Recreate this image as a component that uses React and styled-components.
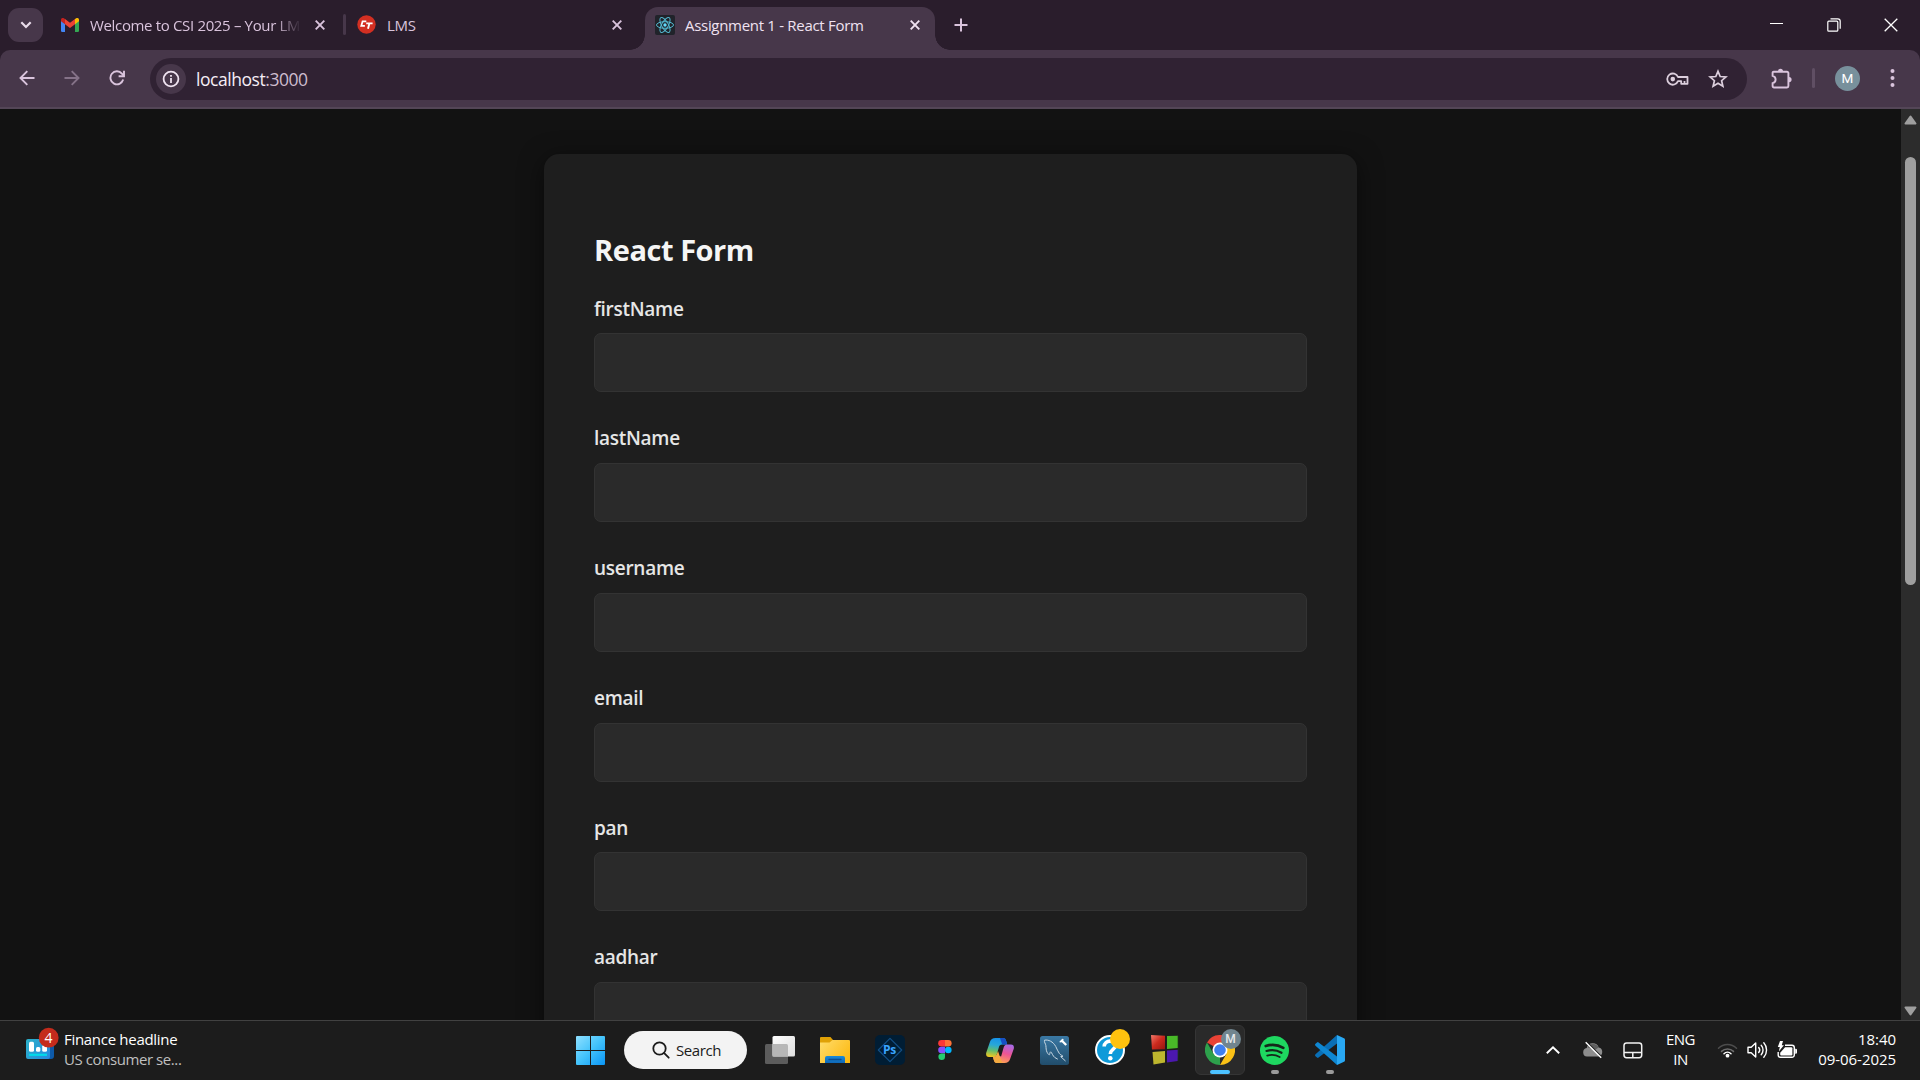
import React from 'react';
import styled, { createGlobalStyle } from 'styled-components';

const GlobalStyle = createGlobalStyle`
  *, *::before, *::after { box-sizing: border-box; }
  html, body { margin: 0; padding: 0; background: #121212; overflow: hidden; }
  body { font-family: 'Open Sans', 'Noto Sans', sans-serif; }
  svg { display: block; flex: none; }
`;

const Screen = styled.div`
  width: 1920px;
  height: 1080px;
  display: flex;
  flex-direction: column;
  overflow: hidden;
  background: #121212;
`;

/* ---------- tab strip ---------- */
const TabStrip = styled.header`
  height: 50px;
  flex: none;
  display: flex;
  align-items: flex-start;
  background: #2a1d2c;
  padding-left: 8px;
  color: #d9c3dc;
`;
const TabSearch = styled.button`
  width: 35px;
  height: 34px;
  margin: 8px 7px 0 0;
  padding: 0;
  border: 0;
  border-radius: 11px;
  background: #47374a;
  color: #e9dcea;
  display: grid;
  place-items: center;
`;
const Tab = styled.div`
  position: relative;
  width: ${(p) => p.$width}px;
  height: ${(p) => (p.$active ? 43 : 34)}px;
  margin-top: ${(p) => (p.$active ? 7 : 8)}px;
  margin-left: ${(p) => p.$offset || 0}px;
  padding: ${(p) => (p.$active ? '0 15px 8px 10px' : '0 9px 0 11px')};
  display: flex;
  align-items: center;
  gap: ${(p) => p.$gap}px;
  border-radius: 13px 13px 0 0;
  background: ${(p) => (p.$active ? '#47374a' : 'transparent')};
  color: ${(p) => (p.$active ? '#f0e2f1' : '#d9c3dc')};
  ${(p) =>
    p.$active &&
    `
    &::before, &::after {
      content: '';
      position: absolute;
      bottom: 0;
      width: 15px;
      height: 15px;
    }
    &::before { left: -15px; background: radial-gradient(circle at 0 0, transparent 14.5px, #47374a 15px); }
    &::after { right: -15px; background: radial-gradient(circle at 100% 0, transparent 14.5px, #47374a 15px); }
  `}
`;
const TabTitle = styled.span`
  flex: 1;
  min-width: 0;
  overflow: hidden;
  white-space: nowrap;
  font-size: 15px;
  line-height: 22px;
  letter-spacing: ${(p) => p.$spacing || 0}px;
  ${(p) => p.$fade && 'mask-image: linear-gradient(90deg, #000 185px, transparent 211px);'}
`;
const TabDivider = styled.i`
  width: 3px;
  height: 21px;
  margin: 14px 0 0 9px;
  border-radius: 2px;
  background: #47374a;
`;
const NewTab = styled.div`
  margin: 17px 0 0 18px;
`;
const WindowControls = styled.div`
  margin-left: auto;
  padding-right: 1px;
  height: 50px;
  display: flex;
  align-items: center;
  color: #fff;
`;
const WindowButton = styled.div`
  width: 57px;
  display: grid;
  place-items: center;
`;

/* ---------- toolbar ---------- */
const ToolbarBack = styled.div`
  flex: none;
  background: #2a1d2c;
`;
const Toolbar = styled.nav`
  height: 59px;
  display: flex;
  align-items: center;
  padding: 0 0 1px 5px;
  border-bottom: 2px solid #544657;
  border-radius: 10px 10px 0 0;
  background: #47374a;
  color: #dac4dd;
`;
const ToolButton = styled.div`
  width: 45px;
  height: 40px;
  padding-right: 1px;
  display: grid;
  place-items: center;
  opacity: ${(p) => (p.$dim ? 0.42 : 1)};
`;
const Omnibox = styled.div`
  width: 1597px;
  height: 42px;
  margin: 1px 24px 0 10px;
  padding: 0 19px 0 6px;
  border-radius: 21px;
  background: #302233;
  display: flex;
  align-items: center;
`;
const SiteInfo = styled.div`
  width: 30px;
  height: 30px;
  border-radius: 50%;
  background: #47374a;
  color: #efe3f0;
  display: grid;
  place-items: center;
`;
const Address = styled.span`
  flex: 1;
  margin-left: 10px;
  font-size: 17.5px;
  line-height: 24px;
  letter-spacing: -0.45px;
  color: #f6eef6;
  span { color: #cdbdcf; }
`;
const OmniIcons = styled.div`
  display: flex;
  align-items: center;
  gap: 19px;
  color: #dccfdd;
`;
const ToolDivider = styled.i`
  width: 3px;
  height: 20px;
  margin: 0 20px 0 20px;
  border-radius: 2px;
  background: #604f64;
`;
const Avatar = styled.div`
  width: 25px;
  height: 25px;
  margin-right: 30px;
  border-radius: 50%;
  background: #78909c;
  color: #fff;
  font: 400 13.5px/25px Roboto, sans-serif;
  text-align: center;
`;

/* ---------- page ---------- */
const Viewport = styled.main`
  flex: 1;
  min-height: 0;
  display: flex;
  overflow: hidden;
`;
const Page = styled.div`
  flex: 1;
  display: flex;
  justify-content: center;
  align-items: flex-start;
  padding-top: 45px;
  background: #121212;
`;
const Card = styled.form`
  width: 813px;
  height: 1400px;
  padding: 50px;
  border-radius: 15px;
  background: #1e1e1e;
  box-shadow: 0 5px 25px rgba(0, 0, 0, 0.5);
`;
const Heading = styled.h2`
  margin: 25px 0 0;
  font-size: 29px;
  line-height: 42px;
  font-weight: 700;
  letter-spacing: -0.45px;
  color: #f5f5f5;
`;
const Field = styled.label`
  display: block;
  height: 129.75px;
  padding-top: 23.7px;
`;
const FieldName = styled.span`
  display: block;
  height: 38.6px;
  font-size: 19px;
  line-height: 28px;
  font-weight: 600;
  letter-spacing: -0.28px;
  color: #e6e6e6;
`;
const Input = styled.input`
  display: block;
  width: 100%;
  height: 59px;
  border: 1px solid #333;
  border-radius: 7px;
  background: #2a2a2a;
  outline: none;
`;
const Scrollbar = styled.div`
  width: 19px;
  background: #2c2c2c;
  display: flex;
  flex-direction: column;
  align-items: center;
  padding: 6px 0 4px;
`;
const Thumb = styled.div`
  width: 11px;
  height: 428px;
  margin: 32px 0 auto;
  border-radius: 6px;
  background: #9f9f9f;
`;

/* ---------- taskbar ---------- */
const Taskbar = styled.footer`
  height: 60px;
  flex: none;
  display: flex;
  align-items: stretch;
  border-top: 1px solid #414141;
  background: #1c1c1c;
  color: #fff;
  font-size: 15px;
  line-height: 20px;
`;
const Widget = styled.div`
  width: 563px;
  padding-left: 26px;
  display: flex;
  gap: 5px;
`;
const WidgetIcon = styled.div`
  width: 33px;
  padding-top: 6px;
`;
const WidgetText = styled.div`
  padding-top: 8px;
  white-space: nowrap;
  div { letter-spacing: -0.3px; }
  div + div { color: #c0c0c0; letter-spacing: -0.42px; }
`;
const Slot = styled.div`
  position: relative;
  width: 55px;
  display: grid;
  place-items: center;
  padding-bottom: 1px;
`;
const ActiveTile = styled.div`
  position: relative;
  width: 50px;
  height: 50px;
  border: 1px solid #353535;
  border-radius: 6px;
  background: #2a2a2a;
  display: grid;
  place-items: center;
`;
const Running = styled.i`
  position: absolute;
  left: 50%;
  bottom: ${(p) => (p.$active ? 0 : 6)}px;
  width: ${(p) => (p.$active ? 20 : 8)}px;
  height: 4px;
  transform: translateX(-50%);
  border-radius: 2px;
  background: ${(p) => (p.$active ? '#4cc2ff' : '#9a9a9a')};
`;
const AppBadge = styled.span`
  position: absolute;
  top: ${(p) => p.$top}px;
  left: ${(p) => p.$left}px;
  width: 20px;
  height: 20px;
  border-radius: 50%;
  background: ${(p) => p.$color};
  color: #e6e9eb;
  font: 500 12px/20px Roboto, sans-serif;
  text-align: center;
`;
const SearchPill = styled.div`
  width: 123px;
  height: 38px;
  margin: 10px 5px 0 6px;
  padding-left: 28px;
  border-radius: 19px;
  background: #f3f3f3;
  color: #1b1b1b;
  display: flex;
  align-items: center;
  gap: 6px;
  span { letter-spacing: -0.42px; }
`;
const Tray = styled.div`
  margin-left: auto;
  padding-right: 24px;
  display: flex;
`;
const TrayCell = styled.div`
  width: ${(p) => p.$width}px;
  display: grid;
  place-items: center;
  padding-bottom: 1px;
`;
const TrayText = styled.div`
  width: ${(p) => p.$width}px;
  padding-top: 8px;
  text-align: ${(p) => p.$align};
  letter-spacing: ${(p) => p.$spacing}px;
  white-space: nowrap;
`;

/* ---------- icons ---------- */
const Svg = ({ w, h, vb, children, ...rest }) => (
  <svg width={w} height={h || w} viewBox={vb || `0 0 ${w} ${h || w}`} fill="none" {...rest}>
    {children}
  </svg>
);
const CloseIcon = () => (
  <Svg w={10} stroke="currentColor" strokeWidth="1.9">
    <path d="M.7.7l8.6 8.6M9.3.7L.7 9.3" />
  </Svg>
);
const GmailIcon = () => (
  <Svg w={18} h={14}>
    <path d="M0 2.2L4 5v9H1.2A1.2 1.2 0 0 1 0 12.8z" fill="#4285f4" />
    <path d="M18 2.2L14 5v9h2.8a1.2 1.2 0 0 0 1.2-1.2z" fill="#34a853" />
    <path d="M4 1v5.2L0 3.2V1.8C0 .1 1.9-.6 3.2.4z" fill="#c5221f" />
    <path d="M14 1v5.2l4-3V1.8c0-1.7-1.9-2.4-3.2-1.400z" fill="#fbbc04" />
    <path d="M4 6.2V1l5 3.750L14 1v5.2l-5 3.750z" fill="#ea4335" />
  </Svg>
);
const CtIcon = () => (
  <Svg w={19} h={20}>
    <circle cx="9.500" cy="9.500" r="9.200" fill="#d32f22" />
    <path d="M9.300 6.300H5.600L4.300 10.800H7.900" stroke="#fff" strokeWidth="1.800" />
    <path d="M9.200 8.400H15.600M12.400 8.400L11 13.800" stroke="#fff" strokeWidth="1.900" />
  </Svg>
);
const ReactIcon = () => (
  <Svg w={20}>
    <rect width="20" height="20" rx="2" fill="#20232a" />
    <g stroke="#53b9d1" strokeWidth="1">
      <ellipse cx="10" cy="10" rx="8.500" ry="3.300" />
      <ellipse cx="10" cy="10" rx="8.500" ry="3.300" transform="rotate(60 10 10)" />
      <ellipse cx="10" cy="10" rx="8.500" ry="3.300" transform="rotate(120 10 10)" />
    </g>
    <circle cx="10" cy="10" r="1.700" fill="#61dafb" />
  </Svg>
);
const BackIcon = () => (
  <Svg w={16} stroke="currentColor" strokeWidth="1.900">
    <path d="M15.500 8H1.800M8.300 1.200L1.500 8l6.800 6.800" />
  </Svg>
);
const ForwardIcon = () => (
  <Svg w={16} stroke="currentColor" strokeWidth="1.900">
    <path d="M.5 8h13.700M7.700 1.200L14.500 8l-6.800 6.800" />
  </Svg>
);
const ReloadIcon = () => (
  <Svg w={16} stroke="currentColor" strokeWidth="1.900">
    <path d="M14.200 9.600A6.500 6.500 0 1 1 12.900 3.600L14.600 5.600" />
    <path d="M15 .8v5.400H9.600" />
  </Svg>
);
const KeyIcon = () => (
  <Svg w={23} h={14} stroke="currentColor" strokeWidth="1.800">
    <path d="M12 5A5.600 5.600 0 1 0 12 9.200H15.200V11.800H21.500V5z" strokeLinejoin="round" />
    <circle cx="6.800" cy="7.100" r="2.300" fill="currentColor" stroke="none" />
    <path d="M18.500 12V9" />
  </Svg>
);
const StarIcon = () => (
  <Svg w={20} stroke="currentColor" strokeWidth="1.700">
    <path d="M10 2.300l2.200 5.200 5.700.5-4.300 3.700 1.300 5.500L10 14.300l-4.900 2.900 1.300-5.500L2.100 8l5.700-.5z" />
  </Svg>
);
const PuzzleIcon = () => (
  <Svg w={21} h={21}>
    <path
      d="M2.600 3.700H16a1.400 1.400 0 0 1 1.400 1.400v13a1.400 1.400 0 0 1-1.400 1.400H3a1.400 1.400 0 0 1-1.400-1.400V15.200c4-1 4-6.400 0-7.400V4.700a1 1 0 0 1 1-1z"
      stroke="currentColor"
      strokeWidth="1.900"
    />
    <path d="M7 3.200a2.500 2.500 0 0 1 5 0zM18 9a2.600 2.600 0 0 1 0 5.200z" fill="currentColor" />
  </Svg>
);
const WindowsIcon = () => (
  <Svg w={29}>
    <defs>
      <linearGradient id="win" x1="0" y1="0" x2="29" y2="29" gradientUnits="userSpaceOnUse">
        <stop stopColor="#8fe0ff" />
        <stop offset=".5" stopColor="#43c3fb" />
        <stop offset="1" stopColor="#0a94f4" />
      </linearGradient>
    </defs>
    <path
      d="M1 0H14V14H0V1A1 1 0 0 1 1 0zM15 0H28A1 1 0 0 1 29 1V14H15zM0 15H14V29H1A1 1 0 0 1 0 28zM15 15H29V28A1 1 0 0 1 28 29H15z"
      fill="url(#win)"
    />
  </Svg>
);
const TaskViewIcon = () => (
  <Svg w={30} h={28}>
    <defs>
      <linearGradient id="tv" x1="7" y1="0" x2="30" y2="20" gradientUnits="userSpaceOnUse">
        <stop stopColor="#fff" />
        <stop offset="1" stopColor="#dedede" />
      </linearGradient>
    </defs>
    <rect y="8" width="23" height="20" rx="1.500" fill="#5c5c5c" />
    <rect x="7.500" y="0" width="22.500" height="20.500" rx="1.500" fill="url(#tv)" />
    <path d="M7.500 8H21.500A1.500 1.500 0 0 1 23 9.500V20.500H7.500z" fill="#b7b7b7" />
  </Svg>
);
const FolderIcon = () => (
  <Svg w={30} h={26}>
    <defs>
      <linearGradient id="fo" x1="0" y1="3" x2="30" y2="26" gradientUnits="userSpaceOnUse">
        <stop stopColor="#ffdc6b" />
        <stop offset="1" stopColor="#fcb70b" />
      </linearGradient>
      <linearGradient id="fb" x1="0" y1="19" x2="0" y2="26" gradientUnits="userSpaceOnUse">
        <stop stopColor="#1a8ad8" />
        <stop offset="1" stopColor="#0f68b8" />
      </linearGradient>
    </defs>
    <path d="M0 1A1 1 0 0 1 1 0h9.500L13 3v5H0z" fill="#e0a106" />
    <path d="M0 5.500h9.500L12.500 3H29a1 1 0 0 1 1 1v22H0z" fill="url(#fo)" />
    <path d="M5 26v-5a2 2 0 0 1 2-2h16a2 2 0 0 1 2 2v5z" fill="url(#fb)" />
    <path d="M9 22.500h12" stroke="#0b4f94" strokeWidth="1.300" strokeLinecap="round" />
  </Svg>
);
const PsTile = styled.div`
  width: 30px;
  height: 30px;
  border-radius: 5px;
  background: #001d34;
  display: grid;
  place-items: center;
  > * { grid-area: 1 / 1; }
  span {
    color: #3aa5ff;
    font-size: 12px;
    line-height: 14px;
    font-weight: 700;
    letter-spacing: -0.3px;
  }
`;
const FigmaIcon = () => (
  <Svg w={14} h={20}>
    <path d="M3.500 0H7v6.600H3.500a3.300 3.300 0 0 1 0-6.600z" fill="#ff3737" />
    <path d="M7 0h3.300a3.300 3.300 0 0 1 0 6.600H7z" fill="#ff7237" />
    <path d="M3.500 6.700H7v6.600H3.500a3.300 3.300 0 0 1 0-6.600z" fill="#874fff" />
    <circle cx="10.300" cy="10" r="3.300" fill="#00b6ff" />
    <path d="M3.500 13.400H7v3.300a3.300 3.300 0 1 1-3.500-3.300z" fill="#24cb71" />
  </Svg>
);
const CopilotIcon = () => (
  <Svg w={28} h={25}>
    <defs>
      <linearGradient id="c1" x1="8" y1="0" x2="5" y2="19" gradientUnits="userSpaceOnUse">
        <stop stopColor="#1793e8" />
        <stop offset=".35" stopColor="#28a7d8" />
        <stop offset=".65" stopColor="#62bd70" />
        <stop offset="1" stopColor="#f4c81c" />
      </linearGradient>
      <linearGradient id="c2" x1="22" y1="6" x2="16" y2="25" gradientUnits="userSpaceOnUse">
        <stop stopColor="#a66be8" />
        <stop offset=".5" stopColor="#ee5494" />
        <stop offset="1" stopColor="#ffa254" />
      </linearGradient>
    </defs>
    <path d="M9.500 0H17c2 0 2.600 1.200 3.200 3l1 3.500h-5c-2 0-2.800 1-3.300 2.700l-2.200 7.300c-.6 1.900-1.500 2.500-3.300 2.500H3c-2.500 0-3.400-2-2.700-4.600L3.900 4C4.700 1.300 6.600 0 9.500 0z" fill="url(#c1)" />
    <path d="M14 0h3c2 0 2.600 1.200 3.200 3l1 3.500h-5z" fill="#174fc4" />
    <path d="M18.500 25H11c-2 0-2.600-1.200-3.200-3l-.9-3h.5c2 0 2.800-.8 3.300-2.500l-.2.600 4.600 1.400 2.400-8.500c.6-2 1.600-3.500 3.500-3.500h4c2.500 0 3.400 2 2.700 4.600L24.100 21c-.8 2.700-2.700 4-5.600 4z" fill="url(#c2)" />
    <path d="M7 19c2 0 3.200-.8 3.700-2.500l1.300-3.500L16 25h-5c-2 0-2.600-1.200-3.200-3z" fill="#f3aa40" />
  </Svg>
);
const MysqlIcon = () => (
  <Svg w={29}>
    <defs>
      <linearGradient id="my" x1="0" y1="0" x2="0" y2="29" gradientUnits="userSpaceOnUse">
        <stop stopColor="#3a78a4" />
        <stop offset="1" stopColor="#214d6b" />
      </linearGradient>
    </defs>
    <rect width="29" height="29" rx="2.500" fill="url(#my)" />
    <path
      d="M4.500 4.200c4-.8 8.500 1.400 11.200 6.200 1.600 2.800 2 5 3.600 7 1.200 1.500 2.600 1.900 3.700 2.900l-2.300.3 4.800 4.400M4.500 4.200c-.6 2 1.200 3.400 1.400 5.500.2 2.200.1 4.600 1.200 6.600.6 1 1.500 2.500 2.200 2.500s.3-2.600 1.300-3c1.600 1.100 2 4 4.200 5.700l3 1.700"
      stroke="#c9d8e3"
      strokeWidth="1"
    />
    <path d="M21 4l2.200 2 3 3" stroke="#fff" strokeWidth="2.300" />
    <path d="M19.700 5.700l2.700-.3.500-2.500" stroke="#fff" strokeWidth="1.400" />
  </Svg>
);
const HelpDisc = styled.div`
  width: 30px;
  height: 30px;
  border: 2px solid #fff;
  border-radius: 50%;
  background: #0e9ad9;
  display: grid;
  place-items: center;
`;
const CubesIcon = () => (
  <Svg w={28} h={30}>
    <defs>
      <linearGradient id="q1" x1="0" y1="0" x2="14" y2="14" gradientUnits="userSpaceOnUse">
        <stop stopColor="#f27a6b" />
        <stop offset=".5" stopColor="#cc2a1e" />
        <stop offset="1" stopColor="#96170f" />
      </linearGradient>
    </defs>
    <path d="M0 0l14 .8v13.400L1 14.600z" fill="url(#q1)" />
    <path d="M16 1l11-.3v12.400l-11 .8z" fill="#49ba28" />
    <path d="M1.500 17L14 16v11.500L2.500 29.500z" fill="#bdb62e" />
    <path d="M16 15.500l11.300-.8-.4 11.300L16 27.500z" fill="#4b18ae" />
    <path d="M27.200.7v25.500" stroke="#1a2f15" strokeWidth="1" />
  </Svg>
);
const ChromeIcon = () => (
  <Svg w={30} vb="0 0 48 48">
    <path d="M24 24L3.200 12A24 24 0 0 1 44.800 12H24z" fill="#e94235" />
    <path d="M24 24L24 48A24 24 0 0 1 3.200 12L13.600 30z" fill="#2da14c" />
    <path d="M24 24L34.400 30 24 48A24 24 0 0 0 44.800 12H24z" fill="#fbc116" />
    <circle cx="24" cy="24" r="12" fill="#fff" />
    <circle cx="24" cy="24" r="9.300" fill="#3f7ff0" />
  </Svg>
);
const SpotifyIcon = () => (
  <Svg w={29} stroke="#15271a" strokeLinecap="round">
    <circle cx="14.500" cy="14.500" r="14.500" fill="#1ed760" stroke="none" />
    <path d="M5.700 10c5.600-1.600 12.700-1 17.600 1.900" strokeWidth="2.700" />
    <path d="M6.500 15c4.900-1.400 10.700-.8 15 1.800" strokeWidth="2.200" />
    <path d="M7.200 19.600c4.200-1.200 8.900-.7 12.500 1.500" strokeWidth="1.800" />
  </Svg>
);
const VscodeIcon = () => (
  <Svg w={30}>
    <path d="M22 0v8.500L3.600 22.600a1.300 1.300 0 0 1-1.600 0L.5 21.200a1.300 1.300 0 0 1 0-1.900z" fill="#0a6fb6" />
    <path d="M22 30v-8.500L3.600 7.400a1.300 1.300 0 0 0-1.600 0L.5 8.800a1.300 1.300 0 0 0 0 1.900z" fill="#0f87d2" />
    <path d="M22 0l7 3.300a1.700 1.700 0 0 1 1 1.500v20.400a1.700 1.700 0 0 1-1 1.500L22 30z" fill="#29a8f3" />
  </Svg>
);
const NewsIcon = () => (
  <Svg w={33} h={34}>
    <defs>
      <linearGradient id="nw" x1="0" y1="13" x2="26" y2="32" gradientUnits="userSpaceOnUse">
        <stop stopColor="#2cb0c9" />
        <stop offset="1" stopColor="#2587e2" />
      </linearGradient>
    </defs>
    <path d="M20 14h8v15a3 3 0 0 1-3 3h-5z" fill="#0d59a8" />
    <rect y="12" width="24" height="20" rx="2" fill="url(#nw)" />
    <g fill="#fff">
      <rect x="3" y="14.700" width="5" height="10" rx="1.500" />
      <rect x="10" y="20" width="4.300" height="4.700" rx="1.500" />
      <rect x="16.200" y="18" width="4.800" height="6.700" rx="1.500" />
    </g>
    <path d="M3 27.800h18" stroke="#00dbea" strokeWidth="2.200" />
    <circle cx="22.700" cy="10.700" r="9.900" fill="#c42b1c" />
    <text x="22.500" y="15.700" fill="#fff" fontSize="14" fontFamily="Open Sans, sans-serif" textAnchor="middle">4</text>
  </Svg>
);
const CloudOffIcon = () => (
  <Svg w={22} h={18}>
    <path d="M5 15.500a4.300 4.300 0 0 1-.3-8.500 6.300 6.300 0 0 1 12-.5 4.600 4.600 0 0 1-.2 9z" fill="#8d8d8d" />
    <path d="M5.500 6.200a6.300 6.300 0 0 1 11.200.3l-4 2.500z" fill="#5e5e5e" />
    <path d="M5.200 1.500L20.200 16.500" stroke="#1c1c1c" strokeWidth="1.500" />
    <path d="M3.700 1.300L19.200 16.800" stroke="#fff" strokeWidth="1.400" />
  </Svg>
);
const TouchpadIcon = () => (
  <Svg w={20} h={17} stroke="#f2f2f2" strokeWidth="1.500">
    <rect x="1" y="1" width="17.700" height="14.700" rx="2.600" />
    <path d="M1 10.500h17.700M9.800 10.500v5" />
  </Svg>
);
const WifiIcon = () => (
  <Svg w={21} h={16} strokeWidth="1.500" strokeLinecap="round">
    <path d="M1.500 6.300a12.700 12.700 0 0 1 18 0" stroke="#4c4c4c" />
    <path d="M4.500 9.400a8.500 8.500 0 0 1 12 0" stroke="#6c6c6c" />
    <path d="M7 11.700a5 5 0 0 1 7 0" stroke="#fff" />
    <circle cx="10.500" cy="13.700" r="1.900" fill="#fff" />
  </Svg>
);
const VolumeIcon = () => (
  <Svg w={21} h={18} stroke="#fff" strokeWidth="1.400" strokeLinecap="round" strokeLinejoin="round">
    <path d="M1 6.200h3.200L8.700 2v14l-4.500-4.200H1z" />
    <path d="M11.700 6.500a3.800 3.800 0 0 1 0 5M14.200 4.200a7.200 7.200 0 0 1 0 9.600M16.800 1.800a10.800 10.800 0 0 1 0 14.400" />
  </Svg>
);
const BatteryIcon = () => (
  <Svg w={21} h={18}>
    <path d="M8 4.200h7a2.300 2.300 0 0 1 2.300 2.300v7.500a2.300 2.300 0 0 1-2.300 2.300H3.500a2.300 2.300 0 0 1-2.300-2.300V11" stroke="#fff" strokeWidth="1.400" />
    <path d="M18.200 7.700h.6a1.200 1.200 0 0 1 1.200 1.200v2.700a1.200 1.200 0 0 1-1.200 1.200h-.6z" fill="#fff" />
    <path d="M8 6.200h6.400a1 1 0 0 1 1 1v6.200a1 1 0 0 1-1 1H4.200a1 1 0 0 1-1-1v-1.700z" fill="#fff" />
    <path d="M3 0L.8 6h2L1.800 10.500 6.900 4.300H4.800L6 0z" fill="#fff" />
  </Svg>
);

const fields = ['firstName', 'lastName', 'username', 'email', 'pan', 'aadhar'];

export default function App() {
  return (
    <Screen>
      <GlobalStyle />
      <TabStrip>
        <TabSearch>
          <Svg w={12} h={8} stroke="currentColor" strokeWidth="2.200">
            <path d="M1.300 1.300L6 6l4.700-4.700" />
          </Svg>
        </TabSearch>
        <Tab $width={284} $gap={11}>
          <GmailIcon />
          <TabTitle $spacing={-0.34} $fade>Welcome to CSI 2025 – Your LMS</TabTitle>
          <CloseIcon />
        </Tab>
        <TabDivider />
        <Tab $width={285} $gap={11}>
          <CtIcon />
          <TabTitle $spacing={-0.3}>LMS</TabTitle>
          <CloseIcon />
        </Tab>
        <Tab $width={290} $gap={10} $offset={14} $active>
          <ReactIcon />
          <TabTitle $spacing={-0.3}>Assignment 1 - React Form</TabTitle>
          <CloseIcon />
        </Tab>
        <NewTab>
          <Svg w={16} stroke="currentColor" strokeWidth="2">
            <path d="M8 1.500v13M1.500 8h13" />
          </Svg>
        </NewTab>
        <WindowControls>
          <WindowButton>
            <Svg w={13} h={4} stroke="currentColor"><path d="M0 .5h13" /></Svg>
          </WindowButton>
          <WindowButton>
            <Svg w={14} stroke="currentColor" strokeWidth="1.200">
              <rect x=".8" y="3.200" width="10" height="10" rx="1" />
              <path d="M3.500 .8h7.300a2.400 2.400 0 0 1 2.400 2.400v7.500" />
            </Svg>
          </WindowButton>
          <WindowButton>
            <Svg w={14} stroke="currentColor" strokeWidth="1.300"><path d="M.7.700l12.600 12.600M13.300.700L.700 13.300" /></Svg>
          </WindowButton>
        </WindowControls>
      </TabStrip>

      <ToolbarBack>
        <Toolbar>
          <ToolButton><BackIcon /></ToolButton>
          <ToolButton $dim><ForwardIcon /></ToolButton>
          <ToolButton><ReloadIcon /></ToolButton>
          <Omnibox>
            <SiteInfo>
              <Svg w={18} stroke="currentColor" strokeWidth="1.800">
                <circle cx="9" cy="9" r="7.400" />
                <path d="M9 8v5M9 5v1.800" />
              </Svg>
            </SiteInfo>
            <Address>localhost<span>:3000</span></Address>
            <OmniIcons><KeyIcon /><StarIcon /></OmniIcons>
          </Omnibox>
          <PuzzleIcon />
          <ToolDivider />
          <Avatar>M</Avatar>
          <Svg w={5} h={20}>
            <g fill="currentColor">
              <circle cx="2.500" cy="3" r="2" /><circle cx="2.500" cy="10" r="2" /><circle cx="2.500" cy="17" r="2" />
            </g>
          </Svg>
        </Toolbar>
      </ToolbarBack>

      <Viewport>
        <Page>
          <Card>
            <Heading>React Form</Heading>
            {fields.map((name) => (
              <Field key={name}>
                <FieldName>{name}</FieldName>
                <Input type="text" name={name} />
              </Field>
            ))}
          </Card>
        </Page>
        <Scrollbar>
          <Svg w={13} h={10}><path d="M6.500 1.500L11.500 8.500H1.500z" fill="#9f9f9f" stroke="#9f9f9f" strokeWidth="2" strokeLinejoin="round" /></Svg>
          <Thumb />
          <Svg w={13} h={10}><path d="M6.500 8.500L11.500 1.500H1.500z" fill="#9f9f9f" stroke="#9f9f9f" strokeWidth="2" strokeLinejoin="round" /></Svg>
        </Scrollbar>
      </Viewport>

      <Taskbar>
        <Widget>
          <WidgetIcon><NewsIcon /></WidgetIcon>
          <WidgetText>
            <div>Finance headline</div>
            <div>US consumer se...</div>
          </WidgetText>
        </Widget>
        <Slot><WindowsIcon /></Slot>
        <SearchPill>
          <Svg w={18} stroke="currentColor" strokeWidth="1.800" strokeLinecap="round">
            <circle cx="7.500" cy="7.500" r="6.200" />
            <path d="M12.200 12.200L16.700 16.700" />
          </Svg>
          <span>Search</span>
        </SearchPill>
        <Slot><TaskViewIcon /></Slot>
        <Slot><FolderIcon /></Slot>
        <Slot>
          <PsTile>
            <Svg w={30} stroke="#124f84" strokeWidth="1.200"><path d="M15 3.300L26.700 15 15 26.700 3.300 15z" strokeLinejoin="round" /></Svg>
            <span>Ps</span>
          </PsTile>
        </Slot>
        <Slot><FigmaIcon /></Slot>
        <Slot><CopilotIcon /></Slot>
        <Slot><MysqlIcon /></Slot>
        <Slot>
          <HelpDisc>
            <Svg w={20} h={24} stroke="#fff" strokeWidth="3.600">
              <path d="M4.200 8.500C4.300 1.500 15.500 1.500 15.500 7.500c0 4-5.200 4-5.200 8.500" />
              <circle cx="10.300" cy="20.300" r="2.300" fill="#fff" stroke="none" />
            </Svg>
          </HelpDisc>
          <AppBadge $top={8} $left={28} $color="#ffc20e" />
        </Slot>
        <Slot><CubesIcon /></Slot>
        <Slot>
          <ActiveTile>
            <ChromeIcon />
            <AppBadge $top={3} $left={25} $color="#71858f">M</AppBadge>
            <Running $active />
          </ActiveTile>
        </Slot>
        <Slot><SpotifyIcon /><Running /></Slot>
        <Slot><VscodeIcon /><Running /></Slot>
        <Tray>
          <TrayCell $width={36}>
            <Svg w={14} h={8} stroke="#fff" strokeWidth="1.900"><path d="M.8 7.200L7 1.300l6.200 5.900" /></Svg>
          </TrayCell>
          <TrayCell $width={44}><CloudOffIcon /></TrayCell>
          <TrayCell $width={35}><TouchpadIcon /></TrayCell>
          <TrayText $width={61} $align="center" $spacing={-0.5}>ENG<br />IN</TrayText>
          <TrayCell $width={32}><WifiIcon /></TrayCell>
          <TrayCell $width={29}><VolumeIcon /></TrayCell>
          <TrayCell $width={31}><BatteryIcon /></TrayCell>
          <TrayText $width={93} $align="right" $spacing={-0.05}>18:40<br />09-06-2025</TrayText>
        </Tray>
      </Taskbar>
    </Screen>
  );
}
